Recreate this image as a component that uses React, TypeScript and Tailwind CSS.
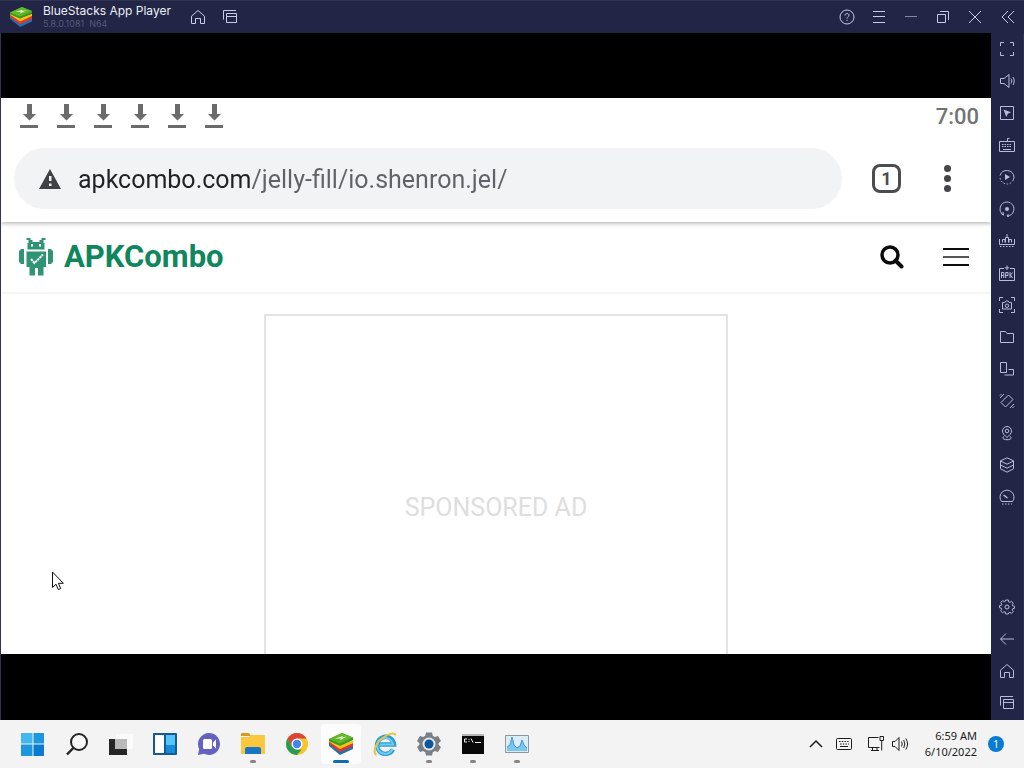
import { useState } from 'react';
import type { ReactNode } from 'react';

type Item = { label: string; icon: ReactNode };

/* Thin outline icon used all over the player frame */
function Line({ children, size = 'w-4 h-4' }: { children: ReactNode; size?: string }) {
  return (
    <svg
      viewBox="0 0 16 16"
      className={size}
      fill="none"
      stroke="currentColor"
      strokeWidth="1"
      aria-hidden="true"
    >
      {children}
    </svg>
  );
}

const homeIcon = (
  <Line>
    <path d="M1.5 7.2 8 1.5l6.500 5.700v7.300H10.500V9.500h-5v5h-4z" />
  </Line>
);

const recentsIcon = (
  <Line>
    <path d="M1.500 10.500v-9h12.500M4.500 4.500h10v9h-10zM4.500 7.500h10" />
  </Line>
);

const windowButtons: Item[] = [
  {
    label: 'Help',
    icon: (
      <Line>
        <circle cx="8" cy="8" r="7" />
        <path d="M6 6.500C6 5.200 6.900 4.500 8 4.500s2 .7 2 1.800c0 1.400-2 1.500-2 3.200M8 10.800v1.200" />
      </Line>
    ),
  },
  { label: 'Menu', icon: <Line><path d="M2 2.500h12M2 7.500h12M2 13.500h12" /></Line> },
  { label: 'Minimize', icon: <Line><path d="M2 7.500h12" opacity=".6" /></Line> },
  {
    label: 'Restore',
    icon: <Line><path d="M2.500 5.500h8v8h-8zM5 2.500h8.500V11" /></Line>,
  },
  { label: 'Close', icon: <Line><path d="m2 2 12 12M14 2 2 14" /></Line> },
];

const tools: Item[] = [
  {
    label: 'Full screen',
    icon: <Line><path d="M1.500 5V1.500H5M11 1.500h3.500V5M14.500 11v3.500H11M5 14.500H1.500V11" /></Line>,
  },
  {
    label: 'Volume',
    icon: (
      <Line>
        <path d="M1.500 5.500H5l5-4v13l-5-4H1.500zM12 5.500c1 1.500 1 3.500 0 5M14 4c1.600 2.500 1.600 5.500 0 8" />
      </Line>
    ),
  },
  {
    label: 'Lock cursor',
    icon: (
      <Line>
        <path d="M1.500 1.500h13v13h-13z" />
        <path d="m4.500 4.500 7.500 2.800-3.200 1.500L7.300 12z" fill="currentColor" stroke="none" />
      </Line>
    ),
  },
  {
    label: 'Game controls',
    icon: (
      <Line>
        <path d="M.5 4.500h15v10H.5zM8.500 4.500v-3h2" />
        <path d="M3 7.500h10M3 9.500h10" strokeDasharray="1.500 1" />
        <path d="M4 12.500h8" />
      </Line>
    ),
  },
  {
    label: 'Sync operations',
    icon: (
      <Line>
        <path d="M1 6.500A7.200 7.200 0 0 1 15 8a7 7 0 0 1-1.500 4.300" />
        <path d="M1 9c.8 4 4 6.200 7.500 6a7 7 0 0 0 4-1.500" strokeDasharray="1.500 1.700" />
        <path d="m6 5 5 3-5 3z" fill="currentColor" stroke="none" />
      </Line>
    ),
  },
  {
    label: 'Macro recorder',
    icon: (
      <Line>
        <path d="M4.500 14A7 7 0 0 1 8 1c1 0 2 .2 3 .7M11.500 2A7 7 0 0 1 8 15M2 12.500 4.500 14l-.5-3M9.500 13 8 15l2 1" />
        <circle cx="8" cy="8" r="2" fill="currentColor" stroke="none" />
      </Line>
    ),
  },
  {
    label: 'Multi-instance',
    icon: (
      <Line>
        <path d="M.5 6v5.500h15V6M3.500 9.500v-3H6v3M6.500 9.500v-5h3v5M10 9.500v-3h2.500v3M8 1v3" />
        <path d="M1 13.500h14" strokeDasharray="1.500 1.500" />
      </Line>
    ),
  },
  {
    label: 'Install APK',
    icon: (
      <Line>
        <path d="M5 3.500H.5v12h15v-12H11M8 .5v4.500M5.800 2.800h4.400" />
        <path d="M2.500 13V7.500h2.300V13M2.500 10.500h2.300M6.700 13V7.500H9v3H6.700M11 7v6M13.500 7.500 11.500 10l2 3" />
      </Line>
    ),
  },
  {
    label: 'Screenshot',
    icon: (
      <Line>
        <path d="M.5 4V.5H4M12 .5h3.500V4M15.500 12v3.500H12M4 15.500H.5V12M3.500 5.500h2.300l1-1.500h2.400l1 1.500h2.300v6.500h-9z" />
        <circle cx="8" cy="8.700" r="1.700" />
      </Line>
    ),
  },
  {
    label: 'Media folder',
    icon: <Line><path d="M1.500 13.500v-11h5l1.500 2h6.500v9z" /></Line>,
  },
  {
    label: 'Rotate',
    icon: <Line><path d="M1.500 1.500h6v10h-6zM9.500 8.500h5v5.500h-9" /></Line>,
  },
  {
    label: 'Shake',
    icon: (
      <Line>
        <path d="M9.500 2 14 6.500 6.500 14 2 9.500zM1 5l4-4M11 15l4-4M1 2.500 2.500 1M13.500 15l1.500-1.500" />
      </Line>
    ),
  },
  {
    label: 'Location',
    icon: (
      <Line>
        <path d="M8 12.500C5.500 10.300 3.500 8.500 3.500 6a4.500 4.500 0 0 1 9 0c0 2.500-2 4.300-4.500 6.500z" />
        <circle cx="8" cy="6" r="1.800" />
        <path d="M5 11.500c-1.500.5-1.500 2 0 2.700 1.700.7 4.300.7 6 0 1.500-.7 1.500-2.200 0-2.700" />
      </Line>
    ),
  },
  {
    label: 'Layers',
    icon: (
      <Line>
        <path d="m8 .8 6.500 3v8L8 15.200l-6.500-3.400v-8zM1.500 4 8 7.200 14.500 4M1.500 8 8 11.200 14.500 8" />
      </Line>
    ),
  },
  {
    label: 'Performance',
    icon: (
      <Line>
        <path d="M2.500 12.500a7 7 0 1 1 11 0z" />
        <path d="M4.500 6 8.500 9" strokeWidth="1.500" />
        <path d="M3 15h10" strokeDasharray="1.500 1.500" />
      </Line>
    ),
  },
];

const systemTools: Item[] = [
  {
    label: 'Settings',
    icon: (
      <Line>
        <circle cx="8" cy="8" r="2" />
        <path d="M6.700 1h2.600l.4 1.900 1.100.5 1.700-1.100 1.800 1.900-1.100 1.600.5 1.100 1.900.4v2l-1.900.4-.5 1.200 1.100 1.600-1.800 1.900-1.700-1.100-1.100.5L9.300 15H6.700l-.4-1.900-1.200-.5-1.600 1.100-1.900-1.900 1.100-1.600-.5-1.100-1.700-.4v-2l1.900-.4.4-1.200-1.100-1.600 1.900-1.900 1.600 1.100 1.100-.5z" />
      </Line>
    ),
  },
  { label: 'Back', icon: <Line><path d="M15 8H1.500M7 2.500 1.500 8 7 13.500" /></Line> },
  { label: 'Android home', icon: homeIcon },
  { label: 'Android recents', icon: recentsIcon },
];

function ToolButton({ item }: { item: Item }) {
  return (
    <button
      aria-label={item.label}
      className="h-8 w-full flex items-center justify-center text-[#b9bbdf] hover:bg-white/10"
    >
      {item.icon}
    </button>
  );
}

function BlueStacksLogo({ className }: { className: string }) {
  return (
    <svg viewBox="0 0 24 24" className={className} aria-hidden="true">
      <path d="m0 14 11 9L24 17v-4L11 18 0 11z" fill="#2a6fae" />
      <path d="m0 11.500 11 8.500 13-6V11l-13 5L0 9z" fill="#e2382b" />
      <path d="m0 9.500 11 7.500 13-6V8.500L11 13 0 7.500z" fill="#fbc412" />
      <path d="M0 7 13 1l11 4.500V8L11 14 0 9z" fill="#3a9a22" />
      <path d="M0 7 13 1l11 4.500L11 11.500z" fill="#62b82a" />
      <path d="m6 6.500 8-2.500-1 1.500 5-1-7 3.700 1-1.800z" fill="#eaf7d8" />
    </svg>
  );
}

function TitleBar() {
  return (
    <header className="h-[33px] shrink-0 flex items-center bg-[#222545] border-t border-[#30334f] text-[#c9cbe8]">
      <BlueStacksLogo className="w-[22px] h-[22px] ml-[10px] mr-[11px]" />
      <div className="font-[Inter,sans-serif] w-[139px] whitespace-nowrap">
        <h1 className="text-xs leading-[14px] text-[#eceef9]">BlueStacks App Player</h1>
        <p className="text-[9px] leading-[12px] text-[#555979]">5.8.0.1081&nbsp; N64</p>
      </div>
      <button aria-label="Home" className="w-8 h-8 flex items-center justify-center">
        {homeIcon}
      </button>
      <button aria-label="Recent apps" className="w-8 h-8 flex items-center justify-center">
        {recentsIcon}
      </button>
      <div className="ml-auto flex">
        {windowButtons.map((b) => (
          <button
            key={b.label}
            aria-label={b.label}
            className="w-8 h-8 flex items-center justify-center hover:bg-white/10"
          >
            {b.icon}
          </button>
        ))}
        <button aria-label="Collapse side bar" className="w-[33px] h-8 flex items-center justify-center">
          <Line><path d="M8 2 2 8l6 6M14 2 8 8l6 6" /></Line>
        </button>
      </div>
    </header>
  );
}

function BrowserBar() {
  const [url, setUrl] = useState('apkcombo.com/jelly-fill/io.shenron.jel/');

  return (
    <div className="relative shrink-0 bg-white shadow-[0_1px_5px_rgba(0,0,0,0.35)]">
      {/* Android status bar */}
      <div className="h-[50px] pl-[19px] pr-3 pt-[5px] flex items-start justify-between text-[#6b6b6b]">
        <div className="flex gap-[19px]">
          {[0, 1, 2, 3, 4, 5].map((n) => (
            <svg key={n} viewBox="0 0 18 25" className="w-[18px] h-[25px]" fill="currentColor" aria-hidden="true">
              <path d="M7 1h5v10h4l-6.500 6.500L3 11h4zM0 22h18v3H0z" />
            </svg>
          ))}
        </div>
        <span className="text-[22px] leading-[28px] font-medium text-[#737373]">7:00</span>
      </div>

      <div className="flex items-center pl-[13px] pr-[39px] pb-[13px]">
        <div className="flex-1 h-[61px] rounded-full bg-[#f1f3f4] flex items-center pl-[25px] pr-6">
          <svg viewBox="0 0 22 20" className="w-[22px] h-5 shrink-0 mr-[17px]" aria-hidden="true">
            <path d="M11 0 22 20H0z" fill="#3f4245" />
            <path d="M10 7h2.500v5H10zM10 14.500h2.500V17H10z" fill="#f1f3f4" />
          </svg>
          <input
            type="text"
            aria-label="Address"
            value={url}
            onChange={(e) => setUrl(e.target.value)}
            className="flex-1 min-w-0 pt-0.5 text-[25px] leading-[32px] outline-none text-transparent caret-black bg-clip-text bg-[linear-gradient(to_right,#202124_172px,#5f6368_172px)]"
          />
        </div>
        <button
          aria-label="Tabs"
          className="ml-[30px] w-[29px] h-[29px] border-[3px] border-[#4a4c4f] rounded-[8px] flex items-center justify-center text-lg leading-none font-bold text-[#4a4c4f]"
        >
          1
        </button>
        <button aria-label="More options" className="ml-[43px] w-2 flex flex-col gap-[3px]">
          <span className="w-[7px] h-[7px] rounded-full bg-[#434548]" />
          <span className="w-[7px] h-[7px] rounded-full bg-[#434548]" />
          <span className="w-[7px] h-[7px] rounded-full bg-[#434548]" />
        </button>
      </div>
    </div>
  );
}

function SiteHeader() {
  return (
    <div className="h-[72px] shrink-0 flex items-center pl-[18px] pr-[22px] pb-px border-b-2 border-[#f6f6f6]">
      <a href="#home" className="flex items-center gap-[11px] text-[#0f865c]">
        <svg viewBox="0 0 34 38" className="w-[34px] h-[38px]" fill="#2f9470" aria-hidden="true">
          <path d="M7.500 0h4v2h2v2h7V2h2V0h4v2h-2v3h1v6.500h-17V5h1V2h-2z" />
          <path d="M0 12.500h1.500v-1.500H5v15H1.500v-1.500H0zM29 11h3.500v1.500H34v12h-1.500V26H29zM7.500 13.500h19.500V29h-2.500v8.500h-5.500V30h-3v7.500h-5.500V29H7.500z" />
          <path d="M12 6h2v2.500h-2zM20 6h2v2.500h-2z" fill="#fff" />
          <path d="m12 21 3.500 4L24 16.500" fill="none" stroke="#fff" strokeWidth="2" strokeDasharray="2.500 .6" />
        </svg>
        <span className="text-[31px] leading-[36px] font-bold">APKCombo</span>
      </a>
      <button aria-label="Search" className="ml-auto">
        <svg viewBox="0 0 24 24" className="w-6 h-6" fill="none" stroke="#0b0b0b" aria-hidden="true">
          <circle cx="10" cy="10" r="8" strokeWidth="3.500" />
          <path d="m15.500 15.500 6 6" strokeWidth="4" strokeLinecap="round" />
        </svg>
      </button>
      <button aria-label="Site menu" className="ml-[39px]">
        <svg viewBox="0 0 26 20" className="w-[26px] h-5" stroke="#0b0b0b" strokeWidth="2" aria-hidden="true">
          <path d="M0 2h26M0 18h26" />
          <path d="M0 10h26" stroke="#555" />
        </svg>
      </button>
    </div>
  );
}

const taskIcons: (Item & { state?: 'running' | 'active' })[] = [
  {
    label: 'Start',
    icon: (
      <svg viewBox="0 0 24 24" className="w-6 h-6" aria-hidden="true">
        <path d="M0 1h11.500v10.500H0z" fill="#43b7f0" />
        <path d="M12.500 1H23v10.500H12.500zM0 12.500h11.500V24H0z" fill="#1d97e0" />
        <path d="M12.500 12.500H23V24H12.500z" fill="#0a7bd0" />
      </svg>
    ),
  },
  {
    label: 'Search',
    icon: (
      <svg viewBox="0 0 24 24" className="w-6 h-6" fill="none" stroke="#242424" strokeWidth="2" aria-hidden="true">
        <circle cx="14" cy="10" r="8" fill="#fafafa" />
        <path d="m8.300 16-6.300 6.500" strokeWidth="2.500" />
      </svg>
    ),
  },
  {
    label: 'Task view',
    icon: (
      <svg viewBox="0 0 24 24" className="w-6 h-6" aria-hidden="true">
        <path d="M7 2h17v15H7z" fill="#fbfbfb" />
        <path d="M0 7h18v16H0z" fill="#262626" />
        <path d="M6 7h12v10H6z" fill="#b9b9b9" />
      </svg>
    ),
  },
  {
    label: 'Widgets',
    icon: (
      <svg viewBox="0 0 24 24" className="w-6 h-6" aria-hidden="true">
        <rect y="1" width="24" height="22" rx="1" fill="#155a94" />
        <path d="M2 3h9v18H2z" fill="#fff" />
        <path d="M13 3h9v10h-9z" fill="#55c5f8" />
        <path d="M13 13h9v8h-9z" fill="#1889db" />
      </svg>
    ),
  },
  {
    label: 'Chat',
    icon: (
      <svg viewBox="0 0 24 24" className="w-6 h-6" aria-hidden="true">
        <path d="M12 1a11 11 0 1 1-5 20.800L1 23l1.200-6A11 11 0 0 1 12 1z" fill="#6661c0" />
        <rect x="6" y="7" width="9" height="10" rx="1.500" fill="#fff" />
        <path d="m16 10.500 3-3v9l-3-3z" fill="#fff" />
      </svg>
    ),
  },
  {
    label: 'File Explorer',
    state: 'running',
    icon: (
      <svg viewBox="0 0 24 24" className="w-6 h-6" aria-hidden="true">
        <path d="M0 2a1 1 0 0 1 1-1h7l2 3H0z" fill="#d69a16" />
        <path d="M0 5h8l2-2h13a1 1 0 0 1 1 1v18H0z" fill="#fbc73c" />
        <path d="M4 22v-5a2 2 0 0 1 2-2h12a2 2 0 0 1 2 2v5z" fill="#1976c4" />
      </svg>
    ),
  },
  {
    label: 'Google Chrome',
    icon: (
      <svg viewBox="0 0 24 24" className="w-6 h-6" aria-hidden="true">
        <circle cx="12" cy="12" r="11" fill="#f9c526" />
        <path d="M2.500 6.500A11 11 0 0 1 21.500 6.500H12L7.200 14.800z" fill="#dc4437" />
        <path d="M2.500 6.500 7.200 14.800 12 17.500h4.700L12 23A11 11 0 0 1 2.500 6.500z" fill="#259b55" />
        <circle cx="12" cy="12" r="5.500" fill="#fff" />
        <circle cx="12" cy="12" r="4.200" fill="#4384ef" />
      </svg>
    ),
  },
  { label: 'BlueStacks', state: 'active', icon: <BlueStacksLogo className="w-6 h-6" /> },
  {
    label: 'Internet Explorer',
    icon: (
      <svg viewBox="0 0 24 24" className="w-6 h-6" fill="none" aria-hidden="true">
        <path d="M20 17.500A8.500 8.500 0 1 1 21 12.500H6.500" stroke="#2d9cd4" strokeWidth="4.500" />
        <path d="M19.500 17A8 8 0 1 1 20 12.500H7" stroke="#6dcdf3" strokeWidth="2" />
        <path d="M3.500 23C-1 20 3 10 11 5c5-3.500 11-5 11.500-1.500" stroke="#eac43b" strokeWidth="2" />
      </svg>
    ),
  },
  {
    label: 'Settings',
    state: 'running',
    icon: (
      <svg viewBox="0 0 24 24" className="w-6 h-6" aria-hidden="true">
        <path
          d="M9 .5h6l.8 3.300 2 1.200 3.200-1 3 5-2.400 2.300v1.500L24 15l-3 5-3.200-1-2 1.200L15 23.500H9l-.8-3.300-2-1.200L3 20l-3-5 2.400-2.200v-1.500L0 9l3-5 3.200 1 2-1.200z"
          fill="#7a7f85"
        />
        <circle cx="12" cy="12" r="6.500" fill="#e4e8ec" />
        <circle cx="12" cy="12" r="4.500" fill="#0f569c" />
      </svg>
    ),
  },
  {
    label: 'Command Prompt',
    state: 'running',
    icon: (
      <svg viewBox="0 0 24 24" className="w-6 h-6" fill="none" aria-hidden="true">
        <path d="M1 2h22v20H1z" fill="#080808" />
        <path d="M1 2h22v2H1z" fill="#b6b6b6" />
        <path d="M6 7H3.500v3H6M8 7v1M8 9v1M10 6.500l2 4M14 10.500h6" stroke="#eee" />
      </svg>
    ),
  },
  {
    label: 'Resource Monitor',
    state: 'running',
    icon: (
      <svg viewBox="0 0 24 24" className="w-6 h-6" aria-hidden="true">
        <path d="M.5 3.500h23v17H.5z" fill="#dcecf6" stroke="#8b97a2" />
        <path d="M2 19v-4l3-2 2-8 2 8 3 3 3-2 2-6 2 5 3 3v3z" fill="#7cc6ec" />
        <path d="m2 15 3-2 2-8 2 8 3 3 3-2 2-6 2 5 3 3" fill="none" stroke="#3f97d0" />
      </svg>
    ),
  },
];

function Taskbar() {
  return (
    <footer className="h-12 shrink-0 bg-[#f3f3f3] flex items-center justify-between pl-[11px] pr-5 text-[#1c1c1c]">
      <nav className="flex">
        {taskIcons.map((t) => (
          <button key={t.label} aria-label={t.label} className="w-11 h-12 flex items-center justify-center">
            <span
              className={`relative w-10 h-10 rounded flex items-center justify-center ${
                t.state === 'active' ? 'bg-[#fcfcfc]' : ''
              }`}
            >
              {t.icon}
              {t.state === 'active' && (
                <span className="absolute bottom-px inset-x-3 h-[3px] rounded-full bg-[#0f6cae]" />
              )}
              {t.state === 'running' && (
                <span className="absolute bottom-px inset-x-[17px] h-[3px] rounded-full bg-[#858585]" />
              )}
            </span>
          </button>
        ))}
      </nav>
      <div className="flex items-center">
        <button aria-label="Show hidden icons" className="mr-[13px]">
          <svg viewBox="0 0 14 16" className="w-[14px] h-4" fill="none" stroke="currentColor" strokeWidth="1.500" aria-hidden="true">
            <path d="m1 11 6-6 6 6" />
          </svg>
        </button>
        <button aria-label="Touch keyboard" className="mr-4">
          <svg viewBox="0 0 16 16" className="w-4 h-4" fill="none" stroke="currentColor" aria-hidden="true">
            <rect x=".5" y="2.500" width="15" height="11" rx="1" />
            <path d="M3 5.500h10M4 8h9" strokeDasharray="1.500 1.200" />
            <path d="M4 10.500h8" />
          </svg>
        </button>
        <button aria-label="Network" className="mr-2">
          <svg viewBox="0 0 16 16" className="w-4 h-4" fill="none" stroke="currentColor" aria-hidden="true">
            <path d="M10.500 1.500h-10v10h11M4.500 11.500v3M3 14.500h8M9 11.500v3M12 .5h3.500v4H12zM13.700 4.500v10" />
          </svg>
        </button>
        <button aria-label="Speaker" className="mr-4">
          <svg viewBox="0 0 17 16" className="w-[17px] h-4" fill="none" stroke="currentColor" aria-hidden="true">
            <path d="M.5 5.500H3l4-4v13l-4-4H.5zM9.500 5.500q1.500 2.500 0 5M11.700 4q2.300 4 0 8M13.900 2.500q3.300 5.500 0 11" />
          </svg>
        </button>
        <button className="text-right font-['Noto_Sans',sans-serif] text-[11px] leading-4">
          <span className="block">6:59 AM</span>
          <span className="block">6/10/2022</span>
        </button>
        <button
          aria-label="Notifications"
          className="ml-[11px] w-4 h-4 rounded-full bg-[#0a7bd1] text-white font-['Noto_Sans',sans-serif] text-[10px] leading-4 text-center"
        >
          1
        </button>
      </div>
    </footer>
  );
}

export default function App() {
  return (
    <div className="h-screen flex flex-col overflow-hidden font-[Roboto,sans-serif]">
      <TitleBar />
      <div className="flex-1 min-h-0 flex bg-[#222545]">
        <main className="flex-1 min-w-0 flex flex-col bg-black border-l border-[#30334f] pt-[65px] pb-[66px]">
          <div className="relative flex-1 min-h-0 flex flex-col overflow-hidden bg-white">
            <BrowserBar />
            <SiteHeader />
            <section className="flex-1 min-h-0 pt-5 flex justify-center">
              <div className="w-[464px] border-2 border-b-0 border-[#e3e3e3] flex items-center justify-center pt-[46px]">
                <p className="text-[25px] leading-[32px] text-[#dedede]">SPONSORED AD</p>
              </div>
            </section>
            {/* Mouse pointer */}
            <svg
              viewBox="0 0 12 19"
              className="absolute left-[51px] bottom-16 w-3 h-[19px]"
              fill="#fff"
              stroke="#111"
              aria-hidden="true"
            >
              <path d="M.5 1v15.500l3.500-3.300 2.300 5.300 2.400-1-2.300-5.200h4.900z" />
            </svg>
          </div>
        </main>
        <aside className="w-[33px] shrink-0 flex flex-col justify-between border-r border-[#30334f] pb-px">
          <div>
            {tools.map((t) => (
              <ToolButton key={t.label} item={t} />
            ))}
          </div>
          <div>
            {systemTools.map((t) => (
              <ToolButton key={t.label} item={t} />
            ))}
          </div>
        </aside>
      </div>
      <Taskbar />
    </div>
  );
}
